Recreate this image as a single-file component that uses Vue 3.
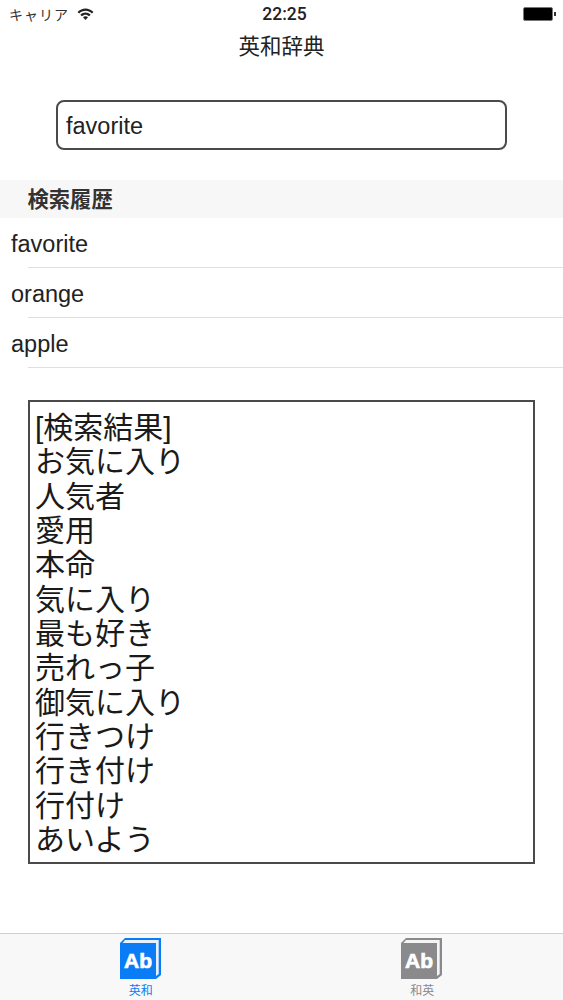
<script setup>
const history = ['favorite', 'orange', 'apple']
const results = ['[検索結果]', 'お気に入り', '人気者', '愛用', '本命', '気に入り', '最も好き', '売れっ子', '御気に入り', '行きつけ', '行き付け', '行付け', 'あいよう']
</script>

<template>
  <div class="app">
    <div class="status">
      <div class="status-left">
        <span class="carrier">キャリア</span>
        <svg class="wifi" width="17" height="12" viewBox="0 0 16 12">
          <path d="M0 3.9C4.4 -0.8 11.6 -0.8 16 3.9L14.4 5.5C10.8 1.7 5.2 1.7 1.6 5.5Z" fill="#222" />
          <path d="M2.8 6.7C5.8 3.7 10.2 3.7 13.2 6.7L11.6 8.3C9.6 6.2 6.4 6.2 4.4 8.3Z" fill="#222" />
          <path d="M5.5 9.3C7 7.9 9 7.9 10.5 9.3L8 11.9Z" fill="#222" />
        </svg>
      </div>
      <span class="time">22:25</span>
      <div class="battery"><span class="cell"></span><span class="nub"></span></div>
    </div>
    <div class="title">英和辞典</div>
    <div class="search-wrap">
      <div class="search">favorite</div>
    </div>
    <div class="section">検索履歴</div>
    <ul class="list">
      <li v-for="item in history" :key="item" class="row"><span class="row-text">{{ item }}</span></li>
    </ul>
    <div class="result-wrap">
      <div class="result">
        <div v-for="line in results" :key="line">{{ line }}</div>
      </div>
    </div>
    <div class="tabs">
      <div class="tab active">
        <svg width="42" height="42" viewBox="0 0 42 42">
          <path d="M0 5L5 0H41V37L36 41H0Z" fill="#0a7cf5" />
          <path d="M5 2H38.7V36L36 38V5H2.5Z" fill="#fff" opacity=".9" />
          <text x="18" y="30" text-anchor="middle" class="ab">Ab</text>
        </svg>
        <span class="tab-label">英和</span>
      </div>
      <div class="tab">
        <svg width="42" height="42" viewBox="0 0 42 42">
          <path d="M0 5L5 0H41V37L36 41H0Z" fill="#8a8a8c" />
          <path d="M5 2H38.7V36L36 38V5H2.5Z" fill="#fff" opacity=".9" />
          <text x="18" y="30" text-anchor="middle" class="ab">Ab</text>
        </svg>
        <span class="tab-label">和英</span>
      </div>
    </div>
  </div>
</template>

<style>
html, body { margin: 0; background: #fff; }
</style>

<style scoped>
.app {
  width: 563px;
  height: 1000px;
  display: flex;
  flex-direction: column;
  overflow: hidden;
  background: #fff;
  color: #111;
  font-family: "Liberation Sans", "Noto Sans CJK JP", sans-serif;
}
.status {
  height: 28px;
  padding: 0 7px 0 9px;
  display: grid;
  grid-template-columns: 1fr auto 1fr;
  align-items: center;
}
.status-left { display: flex; align-items: center; gap: 8px; }
.carrier { font-size: 14px; color: #333; letter-spacing: 1px; }
.wifi { margin-top: -1px; }
.time { font-family: Roboto, "Liberation Sans", sans-serif; font-size: 17.5px; font-weight: 500; color: #222; margin-left: 4px; }
.battery { justify-self: end; display: flex; align-items: center; }
.cell { width: 28px; height: 12px; background: #000; border: 1px solid #777; border-radius: 2px; }
.nub { width: 2px; height: 4px; background: #333; margin-left: 1px; }
.title {
  height: 36px;
  line-height: 38px;
  text-align: center;
  font-size: 21.5px;
  color: #222;
}
.search-wrap { padding: 36px 56px 30px; }
.search {
  height: 50px;
  box-sizing: border-box;
  line-height: 48px;
  padding-left: 8px;
  border: 2px solid #4a4a4a;
  border-radius: 8px;
  font-size: 23.5px;
  color: #222;
}
.section {
  height: 38px;
  line-height: 40px;
  padding-left: 27.5px;
  background: #f7f7f8;
  font-size: 21.3px;
  font-weight: 700;
  color: #333;
}
.list { list-style: none; margin: 0; padding: 0; }
.row { height: 50px; padding-left: 11px; position: relative; }
.row::after {
  content: "";
  position: absolute;
  left: 28px;
  right: 0;
  bottom: 0;
  height: 1px;
  background: #dfdfe0;
}
.row-text { line-height: 52px; font-size: 23.5px; color: #222; }
.result-wrap { padding: 32px 28px 0; }
.result {
  height: 464px;
  box-sizing: border-box;
  padding: 9px 5px 0;
  border: 2px solid #4a4a4a;
  font-size: 30px;
  line-height: 34.33px;
  color: #1a1a1a;
}
.tabs {
  margin-top: auto;
  height: 67px;
  box-sizing: border-box;
  border-top: 1px solid #d0d0d2;
  background: #f8f8f8;
  display: grid;
  grid-template-columns: 1fr 1fr;
}
.tab {
  display: flex;
  flex-direction: column;
  align-items: center;
  padding-top: 4px;
  color: #8a8a8c;
}
.tab.active { color: #0a7cf5; }
.tab-label { font-size: 12px; line-height: 14px; margin-top: 4px; }
.ab {
  font-size: 21px;
  font-weight: 700;
  fill: #fff;
  stroke: #fff;
  stroke-width: .7px;
  font-family: "Liberation Sans", sans-serif;
}
</style>
